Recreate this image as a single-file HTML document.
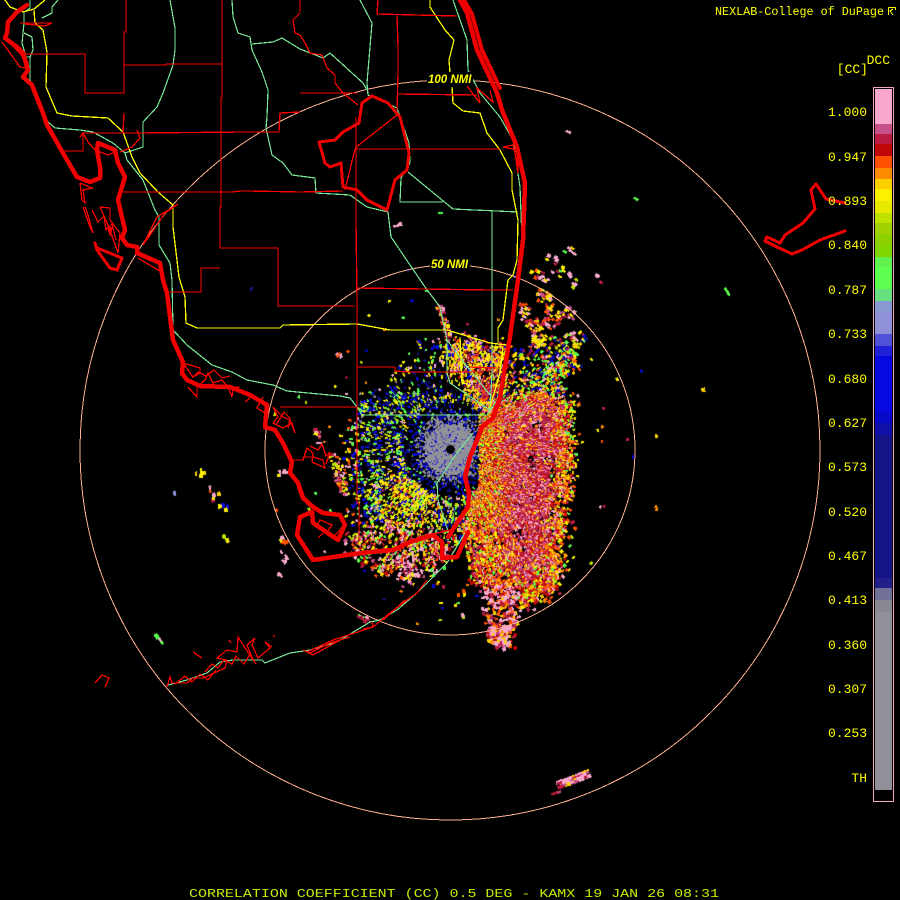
<!DOCTYPE html>
<html>
<head>
<meta charset="utf-8">
<title>CC 0.5 DEG KAMX</title>
<style>
html,body{margin:0;padding:0;background:#000;width:900px;height:900px;overflow:hidden}
#r,#m{position:absolute;left:0;top:0;width:900px;height:900px;display:block}
.t{font-family:"Liberation Mono",monospace;fill:#ff0;font-size:13px}
.l{font-family:"Liberation Sans",sans-serif;font-weight:bold;font-style:italic;fill:#ff0;font-size:11.5px}
</style>
</head>
<body>
<canvas id="r" width="900" height="900"></canvas>
<svg id="m" width="900" height="900" viewBox="0 0 900 900" xmlns="http://www.w3.org/2000/svg">
<g fill="none" stroke="#ffb090" stroke-width="1" shape-rendering="crispEdges">
<circle cx="450" cy="450" r="370"/>
<circle cx="450" cy="450" r="185"/>
</g>
<g fill="none" stroke="#78e898" stroke-width="1.2" shape-rendering="crispEdges">
<polyline points="30,0 30,8 24,12 24,23 22,43 26,57 30,57 30,80 38,97 48,122 55,128 80,130 93,132 113,143 125,153 127,160 143,180 155,210 159,217 159,245 170,263 172,280 173,330 187,345 212,365 232,372 247,380 273,385 287,391 340,396 350,398 357,407 362,415 487,415"/>
<polyline points="24,33 32,37 33,50 30,57"/>
<polyline points="58,0 52,7 52,13 42,18"/>
<polyline points="170,0 175,28 175,50 173,65 163,93 157,107 143,122 143,147 125,153"/>
<polyline points="232,0 233,17 238,33 250,37 252,50 262,72 268,90 267,117 266,128 272,155 283,163 292,175 315,178 316,193 350,195 367,207 388,212 391,237 425,287 440,307 447,340 447,373 450,383 490,410"/>
<polyline points="252,44 273,42 282,38 300,49 323,58 330,53 363,83 367,90"/>
<polyline points="360,0 372,23 367,83 368,95 397,108 409,143 410,163 401,178 400,202 443,202"/>
<polyline points="408,172 453,209 518,212"/>
<polyline points="492,212 492,373 490,410"/>
<polyline points="453,0 467,40 468,70 480,93 500,117 513,140 520,187 522,240 520,267 507,353 497,400 487,415"/>
<polyline points="437,483 438,500 447,528 452,540"/>
<polyline points="437,483 457,453 473,433"/>
<polyline points="168,685 187,680 207,673 220,662 233,660 262,660 265,663 290,653 310,650 337,642 370,622 380,620 397,610 417,593 447,563 465,533"/>
<polyline points="447,340 462,360 490,395"/>
</g>
<g fill="none" stroke="#ff0" stroke-width="1.3" shape-rendering="crispEdges">
<polyline points="5,0 10,7 23,12 34,9 45,0"/>
<polyline points="34,10 35,23 43,30 47,52 46,87 57,113 72,116 108,118 123,132 132,157 140,173 158,192 173,205 173,227 179,277 185,297 186,323 197,328 280,328 283,325 357,324 390,330 447,330 490,343 507,345"/>
<polyline points="430,0 430,7 445,30 454,40 449,60 450,73"/>
<polyline points="452,87 453,103 463,111 480,113 487,133 500,150 512,173 512,190 518,220 517,260 513,275 508,280 503,320 498,328 498,343"/>
<polyline points="460,337 462,383 468,384"/>
<polyline points="493,347 503,347 500,373 490,407"/>
</g>
<g fill="none" stroke="#f00" stroke-width="1.3" shape-rendering="crispEdges">
<polyline points="126,0 126,32 124,32 124,93 85,93 85,54 25,54"/>
<polyline points="124,65 166,65 166,64 222,64"/>
<polyline points="222,0 222,98 221,98 221,207 220,207 220,248 278,248 278,306 355,306"/>
<polyline points="220,268 201,268 201,292 170,292"/>
<polyline points="124,113 123,133"/>
<polyline points="63,151 83,151 83,133 137,133 245,132 279,132 280,113 300,112"/>
<polyline points="123,192 232,192 241,191 248,191 300,192 343,191"/>
<polyline points="378,0 377,14 457,16"/>
<polyline points="397,15 398,47 398,73 397,110"/>
<polyline points="300,93 357,93"/>
<polyline points="397,94 477,95"/>
<polyline points="356,117 356,220 357,300 357,503 359,503 359,540"/>
<polyline points="355,149 500,149"/>
<polyline points="355,148 397,115"/>
<polyline points="355,149 345,190"/>
<polyline points="300,35 305,43 310,53 322,55 327,68 335,75 335,83 343,93 358,105"/>
<polyline points="300,13 293,20 295,33 300,35"/>
<polyline points="357,288 490,290 513,290"/>
<polyline points="357,367 395,367 395,371 407,372 473,372"/>
<polyline points="470,367 497,368"/>
<polyline points="280,407 357,407"/>
<polyline points="300,0 300,12"/>
<polyline points="20,23 52,23 45,26 25,24"/>
<polyline points="2,42 20,67 25,68 28,62 12,45"/>
<polyline points="80,137 83,133 88,142 95,150 108,155 115,152"/>
<polyline points="137,130 140,138 132,147 120,152"/>
<polyline points="80,183 82,200 85,203 83,190 92,188 80,183"/>
<polyline points="83,207 90,227 93,233 88,215 85,207"/>
<polyline points="100,207 110,208 110,220 120,233 118,253 108,225 100,207"/>
<polyline points="138,258 163,273 160,263"/>
<polyline points="143,245 157,217 178,204 165,213 150,235 143,245"/>
<polyline points="467,86 480,103 477,88 493,102 490,90"/>
<polyline points="503,147 513,145 515,153 518,173 517,150 503,147"/>
<polyline points="183,363 200,368 200,373 193,377 183,363"/>
<polyline points="188,387 197,397 197,387 205,380 208,373 213,383 222,380 228,387 232,397 233,387 240,387"/>
<polyline points="245,402 250,398"/>
<polyline points="263,397 257,408 265,413 268,407"/>
<polyline points="273,407 278,417 273,423 283,428 292,423 295,433 290,420 283,417 278,412 273,407"/>
<polyline points="292,460 303,460 307,448 313,453 312,462 325,468 323,460 313,457 303,457"/>
<polyline points="317,525 327,532 332,525 320,520 317,525"/>
<polyline points="427,580 417,593 407,600 390,613 373,627 333,640 307,652 313,655 340,640"/>
<polyline points="167,687 170,677 172,683 187,683 193,678 203,678 210,675 225,668 227,660 217,658 227,650 237,652 238,637 253,660 247,645 255,638 252,645 258,658 270,648 265,642 272,647"/>
<polyline points="193,652 202,658"/>
<polyline points="229,640 231,643"/>
<polyline points="273,635 275,637"/>
<polyline points="303,650 310,653 330,643 350,637"/>
<polyline points="372,622 373,627 363,629"/>
<polyline points="383,620 392,612 405,600"/>
<polyline points="95,683 102,675 109,678 105,687"/>
<polyline points="429,535 450,530 455,540"/>
<polyline points="205,672 212,664 218,668 224,660 232,664 236,656 244,664 250,654 256,664"/>
<polyline points="175,684 185,676 192,682 200,674 208,680 216,670"/>
<polyline points="192,378 198,372 206,376 214,370 222,378 230,376"/>
<polyline points="276,425 284,412 290,418 288,428"/>
<polyline points="310,446 318,450 322,444 326,456 330,452 326,464"/>
<polyline points="92,210 98,222 104,216 106,230 112,224 116,240"/>
<polyline points="318,538 326,530 334,536 340,530"/>
</g>
<g fill="none" stroke="#f00000" stroke-linejoin="round" stroke-linecap="round" shape-rendering="crispEdges">
<polyline stroke-width="4.5" points="27,5 17,12 8,22 7,33 5,38 17,47 23,53 28,70 23,77 32,85 43,113 47,125 63,153 77,177 90,182 100,178 100,167 97,150 98,143 115,150 118,163 125,177 118,200 125,230 122,238 127,245 137,247 137,253 160,263 163,280 167,293 170,317 173,340 183,362 182,373 187,380 200,386 230,387 250,395 267,405 265,427 275,430 283,443 292,462 290,473 298,483 303,498 313,507 323,513 340,515 345,525 338,540 313,523 312,512 300,517 297,535 313,560 347,555 370,552 393,550 410,542 433,535 442,542 442,558 457,557 468,532"/>
<polyline stroke-width="4.5" points="448,537 457,523 468,507 469,493 465,477 470,457 477,440 482,427 493,418 500,397 510,337 518,280 523,240 525,183 517,147 502,110 497,93 477,50 467,13 460,0"/>
<polyline stroke-width="4" points="464,0 472,14 482,50 500,88"/>
<polyline stroke-width="3" points="372,96 362,103 359,123 343,132 335,140 319,142 325,163 330,167 341,163 343,187 357,190 367,200 387,210 395,180 407,170 409,153 400,117 388,103 372,96"/>
<polyline stroke-width="3" points="845,203 826,199 816,184 811,190 815,209 803,223 785,235 780,243 767,237 765,241 777,247 792,254 802,250 820,240 845,231"/>
<polyline stroke-width="3" points="95,243 97,250 110,268 117,270 122,258 97,248"/>
</g>
<polygon points="107,227 113,227 110,237" fill="#f00"/>
<rect x="427" y="72" width="46" height="14" fill="#000"/>
<text class="l" x="428" y="83">100 NMI</text>
<rect x="430" y="258" width="40" height="13" fill="#000"/>
<text class="l" x="431" y="268">50 NMI</text>
<g shape-rendering="crispEdges">
<rect x="873" y="87" width="21" height="715" fill="#f0a8c0"/>
<rect x="874" y="88" width="19" height="713" fill="#000"/>
<rect x="875" y="89" width="17" height="35" fill="#f8a8cc"/>
<rect x="875" y="124" width="17" height="10" fill="#c85088"/>
<rect x="875" y="134" width="17" height="10" fill="#b81c40"/>
<rect x="875" y="144" width="17" height="12" fill="#c00808"/>
<rect x="875" y="156" width="17" height="12" fill="#ff5000"/>
<rect x="875" y="168" width="17" height="11" fill="#ff8c00"/>
<rect x="875" y="179" width="17" height="10" fill="#ffd000"/>
<rect x="875" y="189" width="17" height="12" fill="#fff000"/>
<rect x="875" y="201" width="17" height="12" fill="#e8e800"/>
<rect x="875" y="213" width="17" height="10" fill="#c0e000"/>
<rect x="875" y="223" width="17" height="11" fill="#a0d000"/>
<rect x="875" y="234" width="17" height="11" fill="#8cd000"/>
<rect x="875" y="245" width="17" height="12" fill="#80d400"/>
<rect x="875" y="257" width="17" height="10" fill="#60f050"/>
<rect x="875" y="267" width="17" height="22" fill="#5cff50"/>
<rect x="875" y="289" width="17" height="12" fill="#68e080"/>
<rect x="875" y="301" width="17" height="11" fill="#8898d0"/>
<rect x="875" y="312" width="17" height="22" fill="#9090d8"/>
<rect x="875" y="334" width="17" height="12" fill="#5050d8"/>
<rect x="875" y="346" width="17" height="10" fill="#2020d8"/>
<rect x="875" y="356" width="17" height="56" fill="#0808e0"/>
<rect x="875" y="412" width="17" height="11" fill="#0808c8"/>
<rect x="875" y="423" width="17" height="12" fill="#1010a8"/>
<rect x="875" y="435" width="17" height="143" fill="#141488"/>
<rect x="875" y="578" width="17" height="10" fill="#202088"/>
<rect x="875" y="588" width="17" height="12" fill="#707098"/>
<rect x="875" y="600" width="17" height="12" fill="#888890"/>
<rect x="875" y="612" width="17" height="178" fill="#909098"/>
</g>
<g class="t" text-anchor="end">
<text class="t" x="867" y="116">1.000</text>
<text class="t" x="867" y="161">0.947</text>
<text class="t" x="867" y="205">0.893</text>
<text class="t" x="867" y="249">0.840</text>
<text class="t" x="867" y="294">0.787</text>
<text class="t" x="867" y="338">0.733</text>
<text class="t" x="867" y="383">0.680</text>
<text class="t" x="867" y="427">0.627</text>
<text class="t" x="867" y="471">0.573</text>
<text class="t" x="867" y="516">0.520</text>
<text class="t" x="867" y="560">0.467</text>
<text class="t" x="867" y="604">0.413</text>
<text class="t" x="867" y="649">0.360</text>
<text class="t" x="867" y="693">0.307</text>
<text class="t" x="867" y="737">0.253</text>
<text class="t" x="867" y="782">TH</text>
<text class="t" x="868" y="73">[CC]</text>
<text class="t" x="890" y="64">DCC</text>
</g>
<text class="t" x="715" y="15" style="font-size:12px" textLength="169" lengthAdjust="spacingAndGlyphs">NEXLAB-College of DuPage</text>
<path d="M888.5 7.5H895.5M888.5 7.5V15M893 9L890 11L893 15M895.5 7.5V10" fill="none" stroke="#ff0" stroke-width="1" shape-rendering="crispEdges"/>
<text x="189" y="897" textLength="530" lengthAdjust="spacingAndGlyphs" style="font-family:'Liberation Mono',monospace;font-size:12px;fill:#c8ec00">CORRELATION COEFFICIENT (CC) 0.5 DEG - KAMX 19 JAN 26 08:31</text>
</svg>
<script>
(function(){
var cv=document.getElementById('r'),c=cv.getContext('2d');
var img=c.createImageData(900,900),d=img.data;
var s=20260119;
function R(){s=(s+0x6D2B79F5)|0;var t=Math.imul(s^s>>>15,1|s);t=t+Math.imul(t^t>>>7,61|t)^t;return((t^t>>>14)>>>0)/4294967296}
var C={K:[184,28,64],M:[200,80,136],P:[248,168,204],D:[192,8,8],O:[255,80,0],A:[255,140,0],G:[255,208,0],Y:[255,240,0],L:[192,224,0],V:[140,208,0],N:[92,255,80],T:[104,224,128],B:[8,8,224],U:[20,20,136],W:[144,144,216],E:[144,144,152],R:[240,0,0]};
for(var i=0;i<900*900;i++){d[i*4+3]=255}
function px(x,y,k){x=Math.round(x);y=Math.round(y);if(x<0||y<0||x>=900||y>=900)return;var o=(y*900+x)*4,a=C[k];d[o]=a[0];d[o+1]=a[1];d[o+2]=a[2]}
function inP(p,x,y){var r=false;for(var i=0,j=p.length-2;i<p.length;j=i,i+=2){var xi=p[i],yi=p[i+1],xj=p[j],yj=p[j+1];if(((yi>y)!=(yj>y))&&(x<(xj-xi)*(y-yi)/(yj-yi)+xi))r=!r}return r}
function inS(g,x,y){var ax=g[0],ay=g[1],bx=g[2],by=g[3],w=g[4],dx=bx-ax,dy=by-ay,l=dx*dx+dy*dy,t=l?((x-ax)*dx+(y-ay)*dy)/l:0;t=t<0?0:t>1?1:t;var ex=x-ax-t*dx,ey=y-ay-t*dy;return ex*ex+ey*ey<w*w}
var G=[];for(var i=0;i<80*80;i++)G[i]=R();
function VN(x,y){var u=x/9,v=y/9,a=Math.floor(u),b=Math.floor(v),f=u-a,g=v-b;
 function h(p,q){return G[((q+80)%80)*80+((p+80)%80)]}
 return (h(a,b)*(1-f)+h(a+1,b)*f)*(1-g)+(h(a,b+1)*(1-f)+h(a+1,b+1)*f)*g}
/* zones: [type, geom, density, palette, clump, jitter] */
var Z=[
 ['s',[560,782,586,772,3.5],.9,'KKMPPG'],['s',[555,792,558,791,1.5],.8,'KM'],
 ['s',[667,767,672,765,1],.5,'PK'],['s',[686,762,696,756,1.5],.6,'PKM'],
 ['s',[335,458,345,490,5],.32,'PPYGKMOL'],['s',[199,472,202,472,4],.25,'YGBP'],
 ['s',[214,490,216,495,5],.35,'KOGPYP'],['s',[222,505,230,510,3],.2,'PYB'],
 ['s',[283,541,283,542,5],.3,'YOAKP'],['s',[282,555,284,557,4.5],.28,'PP'],
 ['s',[280,471,285,472,4],.22,'YPP'],['s',[318,432,318,441,4],.25,'PYK'],
 ['s',[339,355,340,356,3],.3,'PO'],['s',[351,318,352,322,2.5],.3,'PY'],
 ['s',[360,615,366,619,3],.4,'PKN'],['s',[276,570,281,577,2],.18,'P'],
 ['s',[158,635,162,642,1.2],.4,'NP'],['s',[597,278,600,282,2],.3,'PK'],
 ['s',[566,130,570,132,1],.35,'P'],['s',[632,198,635,200,1],.35,'N'],['s',[702,200,704,203,1],.35,'P'],
 ['s',[724,287,727,294,.8],.4,'N'],['s',[700,388,701,390,.8],.35,'G'],['s',[655,505,656,511,.8],.35,'A'],
 ['s',[655,435,656,438,.8],.35,'G'],['s',[695,572,697,576,.8],.35,'A'],['s',[831,707,834,700,.8],.4,'L'],
 ['s',[640,370,642,372,.8],.35,'B'],['s',[611,367,613,367,.8],.35,'P'],['s',[250,290,253,287,1],.4,'U'],
 ['s',[396,226,403,226,1],.4,'P'],['s',[439,213,442,214,1],.4,'N'],['s',[228,440,228,443,.8],.35,'V'],
 ['s',[162,486,163,490,.8],.35,'W'],['s',[175,490,175,493,.8],.35,'W'],
 ['s',[225,536,230,542,1],.35,'YL'],['s',[347,696,349,697,.8],.35,'V'],
 /* north-east radial streaks */
 ['s',[523,310,537,333,7],.26,'PYGKMOPY'],['s',[542,297,550,317,7],.24,'PYKOGM'],
 ['s',[548,323,567,315,7],.28,'KPMPYO'],['s',[533,273,542,280,6],.22,'PPKOY'],
 ['s',[550,263,573,283,7],.09,'NPYLK'],['s',[567,250,577,253,4],.14,'PNYG'],
 ['s',[537,340,541,338,6],.5,'YLYG'],['s',[520,354,578,338,7],.26,'NLYBPGKU'],
 /* core of the strong echo */
 ['p',[505,415,520,405,550,402,556,440,551,500,545,560,525,582,508,570,502,530,502,470],.85,'KKKKKKMMMPPPDDOAYK',1,12],
 /* southern tail */
 ['p',[483,585,522,585,515,615,508,650,497,650,487,625],.5,'PPPPMKKDOAGP',1,6],
 /* main echo */
 ['p',[478,425,510,398,545,393,567,398,568,470,562,515,556,590,525,605,483,585,472,580,470,545,462,525,472,490,470,465],.75,'DDOOAAGYYKMPNLKOD',1,7],
 /* east fringe */
 ['p',[565,396,576,400,578,470,570,520,563,592,530,612,520,590,556,585],.09,'GYPNOAKL',0,5],
 /* band to the north-east, wide */
 ['p',[505,397,520,372,575,342,580,357,562,385,572,400,520,402],.34,'NNLYBPGKOU',1,6],
 /* north blob */
 ['s',[440,308,448,335,3.5],.45,'KPYMOK'],
 ['p',[478,383,495,383,492,400,480,400],.5,'KKDMO',0,4],
 ['p',[444,337,465,340,510,350,505,395,490,425,470,398,447,367],.42,'YYGGOADKPMLBY',1,8],
 /* south-west */
 ['p',[395,555,417,553,417,580,398,582],.4,'PPPKMY',0,6],
 ['p',[345,535,390,520,450,535,452,560,425,575,380,572,350,552],.26,'PPKYGNOLDM',1,8],
 ['p',[375,480,432,472,447,510,432,545,385,530],.28,'YYYLLNGPBOKY',1,10],
 /* sparse south speckles */
 ['p',[430,575,482,590,482,625,435,620],.025,'NYPKLBOA',0,4],
 /* general west noise */
 ['p',[358,400,400,385,445,395,475,400,482,470,470,500,465,530,440,560,400,535,360,520],.18,'BBBBUUNNNYYLLPGEB',1,8],
 ['p',[420,340,445,340,445,395,400,385,395,370],.06,'BUNYP',0,6],
 ['p',[345,420,358,420,360,520,345,535],.08,'BNYPO',0,4]
];
function draw(x,y,a,r,k,rw,st){
 var tw=Math.max(1,r*st*1.5),ca=Math.cos(a),sa=Math.sin(a);
 for(var t=-tw/2;t<=tw/2;t+=.7){for(var q=0;q<rw;q+=.7){px(x+ca*t+sa*q,y+sa*t-ca*q,k)}}
}
var st=0.6*Math.PI/180;
var cx=450,cy=449;
for(var deg=0;deg<360;deg+=.6){
 var a=deg*Math.PI/180,sp=R();
 var sx=Math.sin(a),sy=-Math.cos(a);
 var f=sp*sp*1.3+.1;
 for(var r=5;r<360;r+=1.7){
  var x=cx+sx*r,y=cy+sy*r,dn,pal;
  if(r<46&&x<478){
   if(r<24){dn=.6*f+.2;pal='EEEEEEEEEB'}
   else if(r<34){dn=.3*f;pal='EEEEBUB'}
   else{dn=.12*f;pal='UBBEBUN'}
   if(R()<dn)draw(x,y,a,r,pal.charAt(Math.floor(R()*pal.length)),1.7,st);
   continue;
  }
  var done=false;
  for(var z=0;z<Z.length;z++){
   var g=Z[z],j=g[5]||0;
   var jx=x+(R()-.5)*2*j,jy=y+(R()-.5)*2*j;
   var hit=g[0]=='p'?inP(g[1],jx,jy):inS(g[1],x,y);
   if(hit){
    dn=g[2];
    if(g[4])dn*=(.2+1.6*VN(x,y));
    if(R()<dn){
     pal=g[3];
     draw(x,y,a,r,pal.charAt(Math.floor(R()*pal.length)),1.7+(R()<.35?1.7:0),st);
    }
    done=true;break;
   }
  }
  if(done)continue;
  if(r<185&&R()<.003){pal='NYPKLBOAU';draw(x,y,a,r,pal.charAt(Math.floor(R()*pal.length)),1.7,st)}
 }
}
for(var i=-4;i<=4;i++)for(var j=-4;j<=4;j++){if(i*i+j*j<=14){var o=((449+j)*900+450+i)*4;d[o]=0;d[o+1]=0;d[o+2]=0}}
c.putImageData(img,0,0);
})();
</script>
</body>
</html>
